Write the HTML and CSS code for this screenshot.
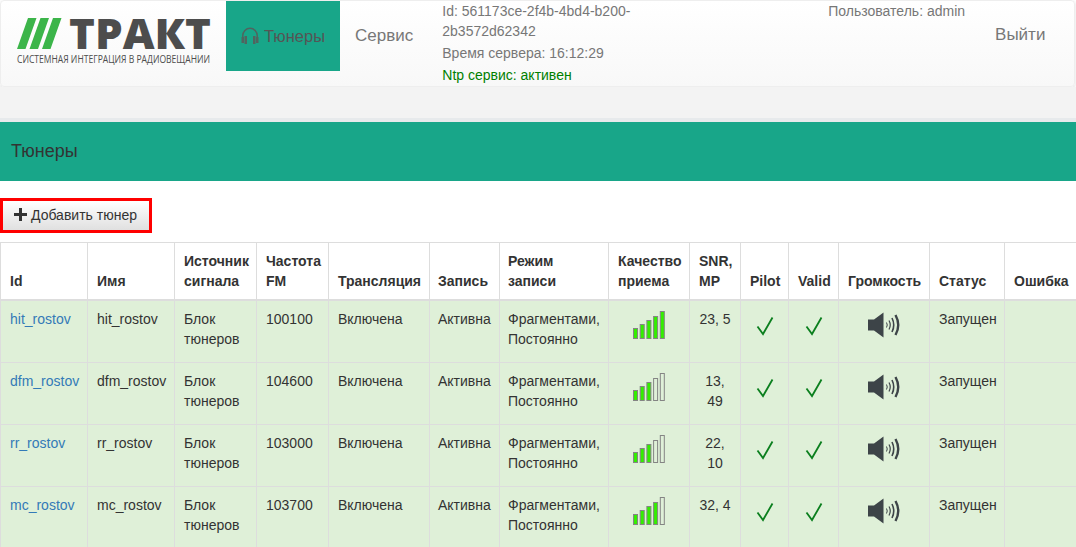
FILE: index.html
```html
<!DOCTYPE html>
<html lang="ru">
<head>
<meta charset="utf-8">
<title>Тюнеры</title>
<link rel="stylesheet" href="styles.css">
</head>
<body>
<svg class="defs" width="0" height="0" aria-hidden="true">
  <symbol id="check" viewBox="0 0 18 20"><path d="M1.500 10.500 L7 18 L16.500 1.500" fill="none" stroke="#0b7f1e" stroke-width="1.800"/></symbol>
  <symbol id="speaker" viewBox="0 0 33 26">
    <path d="M0 7.500H6L15.500 0.500V25.500L6 18.500H0Z" fill="#3d4448"/>
    <g fill="none" stroke="#3d4448">
      <path d="M18.500 10.500Q20 13 18.500 15.500" stroke-width="1"/>
      <path d="M21 8.500Q23.500 13 21 17.500" stroke-width="1.200"/>
      <path d="M24 6Q27.500 13 24 20" stroke-width="1.600"/>
      <path d="M27.500 3Q33 13 27.500 23" stroke-width="2.400"/>
    </g>
  </symbol>
</svg>

<header class="navbar">
  <a class="brand" href="#">
    <svg class="logo" width="196" height="48" viewBox="0 0 196 48">
      <path d="M12 1H20.500L9.500 32H1Z M24.500 1H33L22 32H13.500Z M37 1H45.500L34.500 32H26Z" fill="#3cb54a"/>
      <text class="logo-title" x="53" y="32" textLength="142" lengthAdjust="spacingAndGlyphs">ТРАКТ</text>
      <text class="logo-sub" x="1" y="46" textLength="193" lengthAdjust="spacingAndGlyphs">СИСТЕМНАЯ ИНТЕГРАЦИЯ В РАДИОВЕЩАНИИ</text>
    </svg>
  </a>
  <nav class="menu">
    <a class="menu-link is-active" href="#">
      <svg class="phones" width="18" height="18" viewBox="0 0 18 18">
        <path d="M1.800 11V8.500a7.200 7.200 0 0 1 14.400 0V11" fill="none" stroke="#50645f" stroke-width="1.500"/>
        <rect x="0.500" y="10" width="2.500" height="6" fill="#50645f"/>
        <rect x="3.500" y="9" width="2.500" height="8" fill="#50645f"/>
        <rect x="12" y="9" width="2.500" height="8" fill="#50645f"/>
        <rect x="15" y="10" width="2.500" height="6" fill="#50645f"/>
      </svg>Тюнеры</a>
    <a class="menu-link" href="#">Сервис</a>
  </nav>
  <div class="status">
    <p>Id: 561173ce-2f4b-4bd4-b200-2b3572d62342</p>
    <p>Время сервера: 16:12:29</p>
    <p class="status-ok">Ntp сервис: активен</p>
  </div>
  <div class="user">Пользователь: admin</div>
  <a class="logout" href="#">Выйти</a>
</header>

<div class="page-rule"></div>
<h1 class="page-title">Тюнеры</h1>

<main class="content">
  <div class="toolbar">
    <button class="add-btn" type="button">
      <svg width="13" height="13" viewBox="0 0 13 13"><path d="M5 0H8V5H13V8H8V13H5V8H0V5H5Z" fill="#333"/></svg>
      Добавить тюнер
    </button>
  </div>

  <table class="tuners">
    <colgroup>
      <col class="c-id"><col class="c-name"><col class="c-src"><col class="c-freq"><col class="c-cast"><col class="c-rec"><col class="c-mode"><col class="c-qual"><col class="c-snr"><col class="c-pilot"><col class="c-valid"><col class="c-vol"><col class="c-state"><col class="c-err">
    </colgroup>
    <thead>
      <tr>
        <th>Id</th><th>Имя</th><th>Источник сигнала</th><th>Частота FM</th><th>Трансляция</th><th>Запись</th><th>Режим записи</th><th>Качество приема</th><th>SNR, MP</th><th>Pilot</th><th>Valid</th><th>Громкость</th><th>Статус</th><th>Ошибка</th>
      </tr>
    </thead>
    <tbody>
      <tr>
        <td><a href="#">hit_rostov</a></td><td>hit_rostov</td><td>Блок тюнеров</td><td>100100</td><td>Включена</td><td>Активна</td><td>Фрагментами, Постоянно</td>
        <td class="cell-icon">
          <svg class="bars" width="33" height="30" viewBox="0 0 33 30"><g stroke="#848484"><rect class="on" x="0.500" y="18.500" width="4" height="10"/><rect class="on" x="7.200" y="14.500" width="4" height="14"/><rect class="on" x="13.900" y="10.500" width="4" height="18"/><rect class="on" x="20.600" y="6.500" width="4" height="22"/><rect class="on" x="27.300" y="1.500" width="4" height="27"/></g></svg>
        </td>
        <td class="cell-center">23, 5</td>
        <td class="cell-icon"><svg class="check" width="18" height="20"><use href="#check"/></svg></td>
        <td class="cell-icon"><svg class="check" width="18" height="20"><use href="#check"/></svg></td>
        <td class="cell-icon"><svg class="speaker" width="33" height="26"><use href="#speaker"/></svg></td>
        <td>Запущен</td><td></td>
      </tr>
      <tr>
        <td><a href="#">dfm_rostov</a></td><td>dfm_rostov</td><td>Блок тюнеров</td><td>104600</td><td>Включена</td><td>Активна</td><td>Фрагментами, Постоянно</td>
        <td class="cell-icon">
          <svg class="bars" width="33" height="30" viewBox="0 0 33 30"><g stroke="#848484"><rect class="on" x="0.500" y="18.500" width="4" height="10"/><rect class="on" x="7.200" y="14.500" width="4" height="14"/><rect class="on" x="13.900" y="10.500" width="4" height="18"/><rect class="off" x="20.600" y="6.500" width="4" height="22"/><rect class="off" x="27.300" y="1.500" width="4" height="27"/></g></svg>
        </td>
        <td class="cell-center">13, 49</td>
        <td class="cell-icon"><svg class="check" width="18" height="20"><use href="#check"/></svg></td>
        <td class="cell-icon"><svg class="check" width="18" height="20"><use href="#check"/></svg></td>
        <td class="cell-icon"><svg class="speaker" width="33" height="26"><use href="#speaker"/></svg></td>
        <td>Запущен</td><td></td>
      </tr>
      <tr>
        <td><a href="#">rr_rostov</a></td><td>rr_rostov</td><td>Блок тюнеров</td><td>103000</td><td>Включена</td><td>Активна</td><td>Фрагментами, Постоянно</td>
        <td class="cell-icon">
          <svg class="bars" width="33" height="30" viewBox="0 0 33 30"><g stroke="#848484"><rect class="on" x="0.500" y="18.500" width="4" height="10"/><rect class="on" x="7.200" y="14.500" width="4" height="14"/><rect class="on" x="13.900" y="10.500" width="4" height="18"/><rect class="off" x="20.600" y="6.500" width="4" height="22"/><rect class="off" x="27.300" y="1.500" width="4" height="27"/></g></svg>
        </td>
        <td class="cell-center">22, 10</td>
        <td class="cell-icon"><svg class="check" width="18" height="20"><use href="#check"/></svg></td>
        <td class="cell-icon"><svg class="check" width="18" height="20"><use href="#check"/></svg></td>
        <td class="cell-icon"><svg class="speaker" width="33" height="26"><use href="#speaker"/></svg></td>
        <td>Запущен</td><td></td>
      </tr>
      <tr>
        <td><a href="#">mc_rostov</a></td><td>mc_rostov</td><td>Блок тюнеров</td><td>103700</td><td>Включена</td><td>Активна</td><td>Фрагментами, Постоянно</td>
        <td class="cell-icon">
          <svg class="bars" width="33" height="30" viewBox="0 0 33 30"><g stroke="#848484"><rect class="on" x="0.500" y="18.500" width="4" height="10"/><rect class="on" x="7.200" y="14.500" width="4" height="14"/><rect class="on" x="13.900" y="10.500" width="4" height="18"/><rect class="on" x="20.600" y="6.500" width="4" height="22"/><rect class="off" x="27.300" y="1.500" width="4" height="27"/></g></svg>
        </td>
        <td class="cell-center">32, 4</td>
        <td class="cell-icon"><svg class="check" width="18" height="20"><use href="#check"/></svg></td>
        <td class="cell-icon"><svg class="check" width="18" height="20"><use href="#check"/></svg></td>
        <td class="cell-icon"><svg class="speaker" width="33" height="26"><use href="#speaker"/></svg></td>
        <td>Запущен</td><td></td>
      </tr>
    </tbody>
  </table>
</main>
</body>
</html>
```

FILE: styles.css
```css
* { box-sizing: border-box; }

html, body { height: 100%; }

body {
  margin: 0;
  overflow: hidden;
  background: #fff;
  color: #333;
  font: 14px/20px "Liberation Sans", Arial, sans-serif;
}

a { text-decoration: none; }

.defs { display: block; height: 0; }

.navbar {
  display: flex;
  align-items: flex-start;
  height: 87px;
  border: 1px solid #eee;
  margin: 0 1px 0 0;
  border-radius: 4px;
  background: linear-gradient(#fff, #f8f8f8);
  box-shadow: 0 1px 3px rgba(0, 0, 0, .15);
}

.brand {
  display: block;
  flex: none;
  width: 225px;
  height: 70px;
  padding: 16px 0 0 15px;
}

.logo { display: block; overflow: visible; }
.logo-title { font: 800 43px "Open Sans", "Liberation Sans", sans-serif; fill: #4d4d4d; }
.logo-sub { font: 400 10px "Open Sans", "Liberation Sans", sans-serif; fill: #4d4d4d; }

.menu { display: flex; }

.menu-link {
  display: flex;
  align-items: center;
  height: 70px;
  padding: 0 15px;
  color: #777;
  font-size: 17px;
}

.menu-link.is-active {
  background: #18a689;
  color: #555;
  font-size: 16.500px;
}

.phones { margin-right: 5px; }

.status {
  width: 200px;
  margin: 0 186px 0 14px;
  color: #777;
}

.status p { margin: 0 0 2px; }
.status .status-ok { color: #008000; }

.user {
  flex: none;
  color: #777;
  white-space: nowrap;
}

.logout {
  margin: 24px 0 0 30px;
  color: #777;
  font-size: 17px;
}

.page-rule {
  height: 35px;
  border-bottom: 4px solid #e7eaec;
  background: #f3f3f3;
}

.page-title {
  height: 59px;
  margin: 0;
  padding: 19px 11px 0;
  background: #18a689;
  color: #333;
  font-size: 18px;
  font-weight: 400;
  line-height: 20px;
}

.content { background: #fff; }

.toolbar { padding: 17px 0 9px; }

.add-btn {
  display: flex;
  align-items: center;
  gap: 4px;
  width: 152px;
  height: 35px;
  padding: 0 0 2px 11px;
  border: 3px solid #f00;
  background: linear-gradient(#fff, #e0e0e0);
  color: #333;
  font: inherit;
}

.tuners {
  width: 1077px;
  table-layout: fixed;
  border-collapse: collapse;
}

.c-id { width: 87px; }
.c-name { width: 87px; }
.c-src { width: 82px; }
.c-freq { width: 72px; }
.c-cast { width: 101px; }
.c-rec { width: 70px; }
.c-mode { width: 109px; }
.c-qual { width: 81px; }
.c-snr { width: 51px; }
.c-pilot { width: 48px; }
.c-valid { width: 50px; }
.c-vol { width: 91px; }
.c-state { width: 75px; }
.c-err { width: 73px; }

.tuners th,
.tuners td {
  padding: 9px;
  border: 1px solid #ddd;
  text-align: left;
}

.tuners th {
  height: 57px;
  padding-top: 7px;
  padding-bottom: 8px;
  border-bottom-width: 2px;
  vertical-align: bottom;
  font-weight: 700;
}

.tuners th:nth-child(6),
.tuners td:nth-child(6),
.tuners th:nth-child(7),
.tuners td:nth-child(7) {
  padding-left: 8px;
}

.tuners td {
  height: 62px;
  padding-top: 8px;
  background: #dff0d8;
  vertical-align: top;
}

.tuners tbody tr:first-child td { height: 63px; }

.tuners a { color: #337ab7; }

.tuners .cell-center { text-align: center; }

.tuners .cell-icon {
  padding-top: 0;
  padding-bottom: 0;
  text-align: center;
}

.bars { display: block; margin: 9px auto 0; }
.bars .on { fill: #33ee00; }
.bars .off { fill: none; }

.check { display: block; margin: 15px auto 0; }
.speaker { display: block; margin: 11px auto 0; }
```
